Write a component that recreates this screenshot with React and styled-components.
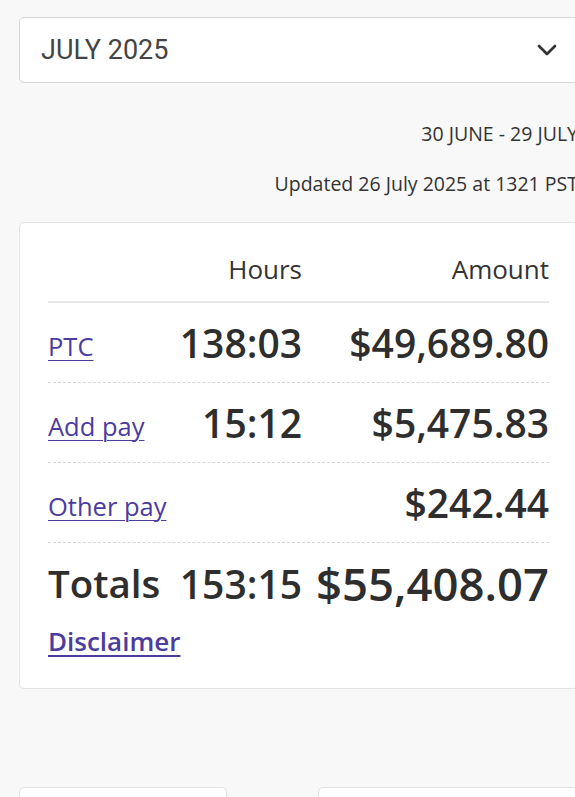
import React from "react";
import styled, { createGlobalStyle } from "styled-components";
import { FiChevronDown } from "react-icons/fi";

const GlobalStyle = createGlobalStyle`
  html, body {
    margin: 0;
    padding: 0;
    background: #f8f8f8;
    overflow: hidden;
  }
  * {
    box-sizing: border-box;
  }
`;

const rows = [
  { label: "PTC", hours: "138:03", amount: "$49,689.80" },
  { label: "Add pay", hours: "15:12", amount: "$5,475.83" },
  { label: "Other pay", hours: "", amount: "$242.44" },
];

const App = () => {
  return (
    <>
      <GlobalStyle />
      <Page>
        <Select>
          <span>JULY 2025</span>
          <FiChevronDown />
        </Select>

        <Period>30 JUNE - 29 JULY</Period>
        <Updated>Updated 26 July 2025 at 1321 PST</Updated>

        <Card>
          <HeadRow>
            <span />
            <span>Hours</span>
            <span>Amount</span>
          </HeadRow>

          {rows.map((r) => (
            <Row key={r.label}>
              <Label href="#">{r.label}</Label>
              <Value>{r.hours}</Value>
              <Value>{r.amount}</Value>
            </Row>
          ))}

          <TotalRow>
            <TotalLabel>Totals</TotalLabel>
            <TotalValue>153:15</TotalValue>
            <TotalValue big>$55,408.07</TotalValue>
          </TotalRow>
          <Disclaimer href="#">Disclaimer</Disclaimer>
        </Card>

        <Buttons>
          <SmallBox />
          <SmallBox />
        </Buttons>
      </Page>
    </>
  );
};

export default App;

const Page = styled.div`
  width: 597px;
  padding: 17px 19px 0;
  font-family: "Open Sans", "Noto Sans", sans-serif;
  color: #2e2e2e;
`;

const Select = styled.div`
  height: 66px;
  background: #fff;
  border: 1px solid #d6d6d6;
  border-radius: 5px;
  display: flex;
  align-items: center;
  justify-content: space-between;
  padding: 0 14px 0 21px;
  font-family: Roboto, "Liberation Sans", sans-serif;
  font-size: 27px;
  color: #444;

  svg {
    font-size: 32px;
    stroke-width: 2px;
    color: #333;
  }
`;

const Period = styled.div`
  text-align: right;
  font-size: 19.5px;
  margin-top: 37px;
  line-height: 28px;
  color: #333;
`;

const Updated = styled.div`
  text-align: right;
  font-size: 19.5px;
  margin-top: 22px;
  line-height: 28px;
  color: #333;
`;

const Card = styled.div`
  margin-top: 24px;
  background: #fff;
  border: 1px solid #e2e2e2;
  border-radius: 5px;
  padding: 29px 28px 29px;
`;

const Grid = styled.div`
  display: grid;
  grid-template-columns: 1fr 126px 247px;
  align-items: center;
`;

const HeadRow = styled(Grid)`
  font-size: 26px;
  line-height: 34px;
  padding-bottom: 15px;
  border-bottom: 2px solid #e8e8e8;
  color: #333;

  span {
    text-align: right;
  }
`;

const Row = styled(Grid)`
  height: 80px;
  border-bottom: 1px dashed #d8d8d8;
`;

const Label = styled.a`
  justify-self: start;
  color: #4b3c9e;
  font-size: 25.5px;
  text-underline-offset: 4px;
  text-decoration-thickness: 1px;
  margin-top: 6px;
`;

const Value = styled.div`
  text-align: right;
  font-size: 39px;
  font-weight: 600;
  color: #2e2e2e;
  white-space: nowrap;
`;

const TotalRow = styled(Grid)`
  height: 80px;
`;

const TotalLabel = styled.div`
  font-size: 38.5px;
  font-weight: 600;
`;

const TotalValue = styled.div`
  text-align: right;
  font-size: ${(p) => (p.big ? "45.5px" : "39px")};
  font-weight: 600;
  white-space: nowrap;
`;

const Disclaimer = styled.a`
  display: inline-block;
  margin-top: 0;
  color: #4b3c9e;
  font-size: 26px;
  font-weight: 600;
  text-underline-offset: 4px;
`;

const Buttons = styled.div`
  display: flex;
  justify-content: space-between;
  margin-top: 98px;
`;

const SmallBox = styled.div`
  width: 208px;
  height: 60px;
  background: #fff;
  border: 1px solid #e0e0e0;
  border-radius: 5px;

  &:last-child {
    width: 260px;
  }
`;
